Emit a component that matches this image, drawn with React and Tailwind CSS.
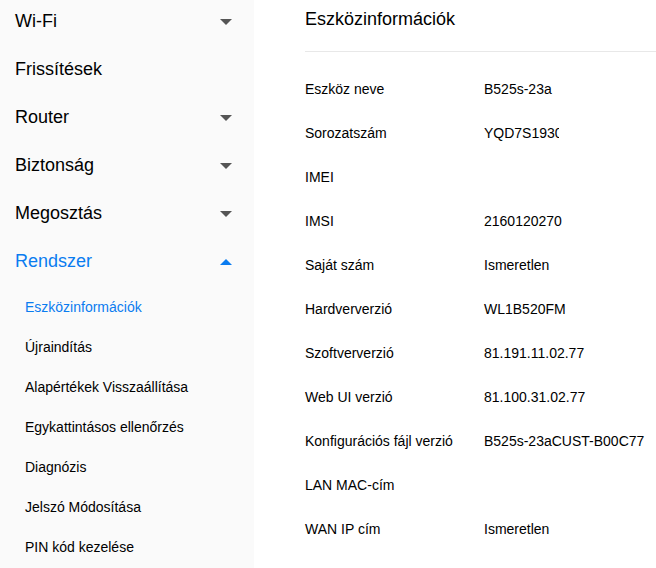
import React from "react";

const menu = [
  { label: "Wi-Fi", arrow: "down" },
  { label: "Frissítések" },
  { label: "Router", arrow: "down" },
  { label: "Biztonság", arrow: "down" },
  { label: "Megosztás", arrow: "down" },
  { label: "Rendszer", arrow: "up", active: true },
];

const subItems = [
  "Eszközinformációk",
  "Újraindítás",
  "Alapértékek Visszaállítása",
  "Egykattintásos ellenőrzés",
  "Diagnózis",
  "Jelszó Módosítása",
  "PIN kód kezelése",
];

const rows = [
  { label: "Eszköz neve", value: "B525s-23a" },
  { label: "Sorozatszám", value: "YQD7S19300000", clip: true },
  { label: "IMEI", value: "" },
  { label: "IMSI", value: "2160120270" },
  { label: "Saját szám", value: "Ismeretlen" },
  { label: "Hardververzió", value: "WL1B520FM" },
  { label: "Szoftververzió", value: "81.191.11.02.77" },
  { label: "Web UI verzió", value: "81.100.31.02.77" },
  { label: "Konfigurációs fájl verzió", value: "B525s-23aCUST-B00C77" },
  { label: "LAN MAC-cím", value: "" },
  { label: "WAN IP cím", value: "Ismeretlen" },
];

function Triangle({ dir, active }) {
  return (
    <svg width="12" height="6" viewBox="0 0 12 6">
      {dir === "down" ? (
        <path d="M0 0h12L6 6z" fill={active ? "#0a7cf0" : "#555"} />
      ) : (
        <path d="M0 6h12L6 0z" fill={active ? "#0a7cf0" : "#555"} />
      )}
    </svg>
  );
}

export default function App() {
  return (
    <div
      className="flex w-[656px] h-[568px] overflow-hidden bg-white text-black"
      style={{ fontFamily: '"Liberation Sans", Arial, sans-serif' }}
    >
      {/* sidebar */}
      <aside className="w-[254px] shrink-0 bg-[#fafafa]">
        <ul className="pt-[1px]">
          {menu.map((m) => (
            <li
              key={m.label}
              className={`h-[48px] flex items-center justify-between pl-[15px] pr-[22px] text-[18px] ${
                m.active ? "text-[#0a7cf0]" : "text-black"
              }`}
            >
              <span className="-mt-[8px]">{m.label}</span>
              {m.arrow && (
                <span className="-mt-[6px]">
                  <Triangle dir={m.arrow} active={m.active} />
                </span>
              )}
            </li>
          ))}
        </ul>
        <ul className="pt-[1px]">
          {subItems.map((s, i) => (
            <li
              key={s}
              className={`h-[40px] flex items-center pl-[25px] text-[14px] ${
                i === 0 ? "text-[#0a7cf0]" : "text-black"
              }`}
            >
              <span className="-mt-[6px]">{s}</span>
            </li>
          ))}
        </ul>
      </aside>

      {/* main */}
      <main className="flex-1 pl-[51px]">
        <h1 className="h-[52px] flex items-center text-[18px] border-b border-[#e8e8e8]">
          <span className="-mt-[12px]">Eszközinformációk</span>
        </h1>
        <div className="pt-[15px]">
          {rows.map((r) => (
            <div key={r.label} className="h-[44px] flex items-center text-[14px]">
              <span className="w-[179px] shrink-0">{r.label}</span>
              {r.clip ? (
                <span className="w-[75px] overflow-hidden whitespace-nowrap">{r.value}</span>
              ) : (
                <span className="whitespace-nowrap">{r.value}</span>
              )}
            </div>
          ))}
        </div>
      </main>
    </div>
  );
}
